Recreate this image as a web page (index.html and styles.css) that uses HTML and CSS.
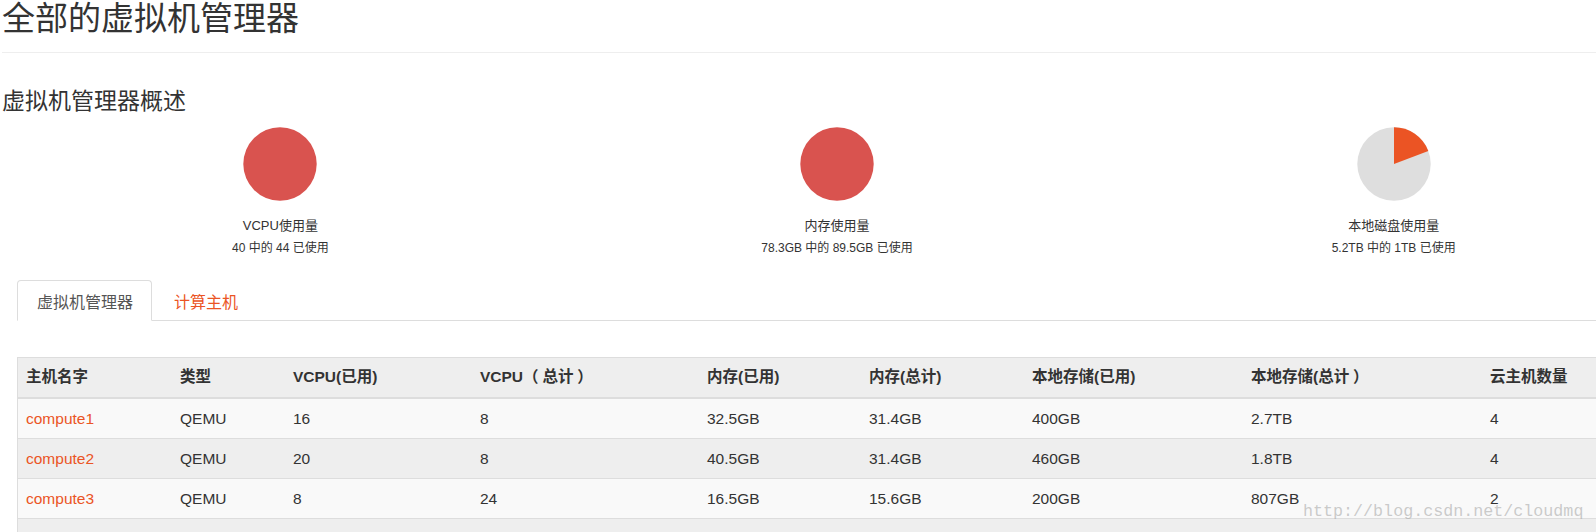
FILE: index.html
```html
<!DOCTYPE html>
<html lang="zh-CN">
<head>
<meta charset="utf-8">
<title>全部的虚拟机管理器</title>
<link rel="stylesheet" href="styles.css">
</head>
<body>
<div class="page">
  <div class="page-header">
    <h1 class="title">全部的虚拟机管理器</h1>
  </div>
  <h3 class="subtitle">虚拟机管理器概述</h3>
  <div class="charts">
    <div class="chart">
      <svg class="pie" width="74" height="74" viewBox="0 0 74 74"><circle cx="37" cy="37" r="36.7" fill="#d9534f"/></svg>
      <div class="chart-title">VCPU使用量</div>
      <div class="chart-sub">40 中的 44 已使用</div>
    </div>
    <div class="chart">
      <svg class="pie" width="74" height="74" viewBox="0 0 74 74"><circle cx="37" cy="37" r="36.7" fill="#d9534f"/></svg>
      <div class="chart-title">内存使用量</div>
      <div class="chart-sub">78.3GB 中的 89.5GB 已使用</div>
    </div>
    <div class="chart">
      <svg class="pie" width="74" height="74" viewBox="0 0 74 74"><circle cx="37" cy="37" r="36.7" fill="#dedede"/><path d="M37 37 L37 0.3 A36.7 36.7 0 0 1 71.31 23.97 Z" fill="#eb5424"/></svg>
      <div class="chart-title">本地磁盘使用量</div>
      <div class="chart-sub">5.2TB 中的 1TB 已使用</div>
    </div>
  </div>
  <div class="content">
    <ul class="tabs">
      <li class="tab active"><a>虚拟机管理器</a></li>
      <li class="tab"><a>计算主机</a></li>
    </ul>
    <table class="hv-table">
      <colgroup>
        <col class="c1"><col class="c2"><col class="c3"><col class="c4"><col class="c5"><col class="c6"><col class="c7"><col class="c8"><col class="c9">
      </colgroup>
      <thead>
        <tr>
          <th>主机名字</th><th>类型</th><th>VCPU(已用)</th><th>VCPU<span class="fwl">（</span>总计<span class="fwr">）</span></th><th>内存(已用)</th><th>内存(总计)</th><th>本地存储(已用)</th><th>本地存储(总计<span class="fwr">）</span></th><th>云主机数量</th>
        </tr>
      </thead>
      <tbody>
        <tr><td><a class="link">compute1</a></td><td>QEMU</td><td>16</td><td>8</td><td>32.5GB</td><td>31.4GB</td><td>400GB</td><td>2.7TB</td><td>4</td></tr>
        <tr><td><a class="link">compute2</a></td><td>QEMU</td><td>20</td><td>8</td><td>40.5GB</td><td>31.4GB</td><td>460GB</td><td>1.8TB</td><td>4</td></tr>
        <tr><td><a class="link">compute3</a></td><td>QEMU</td><td>8</td><td>24</td><td>16.5GB</td><td>15.6GB</td><td>200GB</td><td>807GB</td><td>2</td></tr>
      </tbody>
      <tfoot>
        <tr><td colspan="9"></td></tr>
      </tfoot>
    </table>
  </div>
  <div class="watermark">http://blog.csdn.net/cloudmq</div>
</div>
</body>
</html>
```

FILE: styles.css
```css
html, body {
  margin: 0;
  padding: 0;
  background: #fff;
}
body {
  overflow: hidden;
  font-family: "Liberation Sans", "Noto Sans CJK SC", sans-serif;
  color: #333;
}
.page {
  position: relative;
  width: 1670px;
  padding-left: 2px;
}
.page-header {
  height: 52px;
  border-bottom: 1px solid #eee;
}
.title {
  margin: 0;
  font-size: 33px;
  line-height: 38px;
  font-weight: normal;
  color: #333;
}
.subtitle {
  margin: 33px 0 0;
  font-size: 23px;
  line-height: 30px;
  font-weight: normal;
  color: #333;
}
.charts {
  margin-top: 11px;
  display: grid;
  grid-template-columns: repeat(3, 1fr);
}
.chart {
  display: flex;
  flex-direction: column;
  align-items: center;
}
.pie {
  display: block;
}
.chart-title {
  margin-top: 15px;
  font-size: 13px;
  line-height: 20px;
}
.chart-sub {
  margin-top: 2px;
  font-size: 12px;
  line-height: 20px;
}
.content {
  padding: 0 15px;
  margin-top: 22px;
}
.tabs {
  list-style: none;
  margin: 0;
  padding: 0;
  display: flex;
  border-bottom: 1px solid #ddd;
}
.tab {
  margin: 0 2px -1px 0;
}
.tab a {
  display: block;
  box-sizing: border-box;
  height: 41px;
  padding: 12px 18px 0 19px;
  border: 1px solid transparent;
  border-radius: 4px 4px 0 0;
  font-size: 16px;
  line-height: 20px;
  color: #eb5424;
}
.tab.active a {
  color: #555;
  background: #fff;
  border-color: #ddd #ddd transparent;
}
.hv-table {
  margin-top: 36px;
  width: 100%;
  table-layout: fixed;
  border-collapse: separate;
  border-spacing: 0;
  border-left: 1px solid #ddd;
  font-size: 15.5px;
}
.c1 { width: 154px; }
.c2 { width: 113px; }
.c3 { width: 187px; }
.c4 { width: 227px; }
.c5 { width: 162px; }
.c6 { width: 163px; }
.c7 { width: 219px; }
.c8 { width: 239px; }
.hv-table th {
  text-align: left;
  font-weight: bold;
  padding: 8px 8px 9px;
  line-height: 22px;
  background: #eee;
  border-top: 1px solid #ddd;
  border-bottom: 2px solid #ddd;
  color: #333;
  white-space: nowrap;
}
.fwl {
  margin-right: 0.25em;
}
.fwr {
  margin-left: 0.25em;
}
.hv-table td {
  padding: 9px 8px 8px;
  line-height: 22px;
  border-bottom: 1px solid #ddd;
  white-space: nowrap;
}
.hv-table tbody tr:nth-child(odd) td {
  background: #f9f9f9;
}
.hv-table tbody tr:nth-child(even) td {
  background: #eee;
}
.hv-table tfoot td {
  background: #eee;
  height: 22px;
  border-bottom: none;
}
.link {
  color: #eb5424;
}
.watermark {
  position: absolute;
  left: 1303px;
  top: 502px;
  font-family: "Liberation Mono", monospace;
  font-size: 16.7px;
  line-height: 20px;
  color: rgba(170, 170, 170, 0.6);
  white-space: nowrap;
}
```
